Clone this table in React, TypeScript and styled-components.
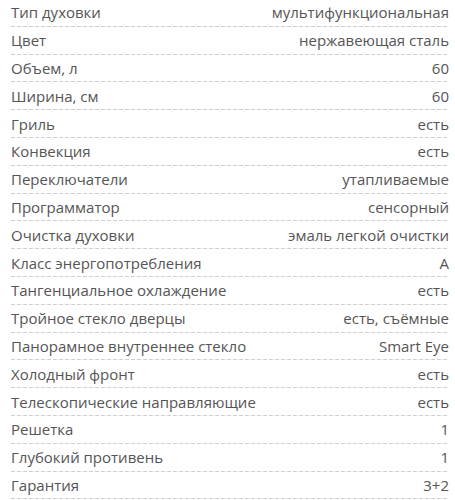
import { FC } from "react";
import styled, { createGlobalStyle } from "styled-components";

const GlobalStyle = createGlobalStyle({
  body: {
    margin: 0,
    background: "#ffffff",
    fontFamily: '"Open Sans", "Noto Sans", sans-serif',
  },
});

const SpecList = styled.dl({
  margin: "-1px 6px 0 11px",
  padding: 0,
  color: "#555555",
  fontSize: 15,
});

const SpecRow = styled.div({
  display: "flex",
  justifyContent: "space-between",
  alignItems: "center",
  height: 27.8,
  boxSizing: "border-box",
  paddingBottom: 1,
  // dashed underline, drawn by hand so the dash rhythm matches
  backgroundImage:
    "repeating-linear-gradient(90deg, #cfcfcf 0 4px, transparent 4px 6px)",
  backgroundSize: "100% 1px",
  backgroundPosition: "left bottom",
  backgroundRepeat: "no-repeat",
});

const SpecName = styled.dt({
  margin: 0,
  whiteSpace: "nowrap",
});

const SpecValue = styled.dd({
  margin: 0,
  whiteSpace: "nowrap",
  textAlign: "right",
});

const specs: [string, string][] = [
  ["Тип духовки", "мультифункциональная"],
  ["Цвет", "нержавеющая сталь"],
  ["Объем, л", "60"],
  ["Ширина, см", "60"],
  ["Гриль", "есть"],
  ["Конвекция", "есть"],
  ["Переключатели", "утапливаемые"],
  ["Программатор", "сенсорный"],
  ["Очистка духовки", "эмаль легкой очистки"],
  ["Класс энергопотребления", "A"],
  ["Тангенциальное охлаждение", "есть"],
  ["Тройное стекло дверцы", "есть, съёмные"],
  ["Панорамное внутреннее стекло", "Smart Eye"],
  ["Холодный фронт", "есть"],
  ["Телескопические направляющие", "есть"],
  ["Решетка", "1"],
  ["Глубокий противень", "1"],
  ["Гарантия", "3+2"],
];

const App: FC = () => {
  return (
    <>
      <GlobalStyle />
      <SpecList>
        {specs.map(([name, value]) => (
          <SpecRow key={name}>
            <SpecName>{name}</SpecName>
            <SpecValue>{value}</SpecValue>
          </SpecRow>
        ))}
      </SpecList>
    </>
  );
};

export default App;
